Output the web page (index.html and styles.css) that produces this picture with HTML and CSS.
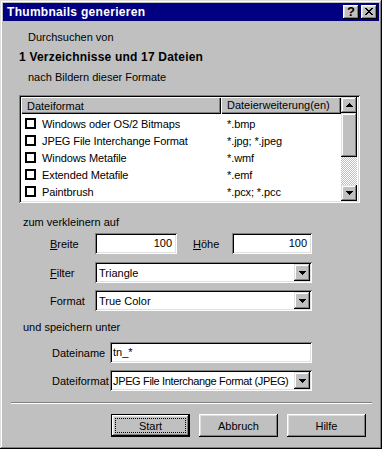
FILE: index.html
```html
<!DOCTYPE html>
<html lang="de">
<head>
    <meta charset="UTF-8">
    <title>Thumbnails generieren</title>
    <link rel="stylesheet" href="styles.css">
</head>
<body>
<div class="window">
    <div class="titlebar">
        <div class="title">Thumbnails generieren</div>
        <div class="title-btn help">?</div>
        <div class="title-btn">
            <svg width="8" height="7" viewBox="0 0 8 7" shape-rendering="crispEdges">
                <path d="M0 0h2v1h-2zM6 0h2v1h-2zM1 1h2v1h-2zM5 1h2v1h-2zM2 2h4v1h-4zM3 3h2v1h-2zM2 4h4v1h-4zM1 5h2v1h-2zM5 5h2v1h-2zM0 6h2v1h-2zM6 6h2v1h-2z"/>
            </svg>
        </div>
    </div>

    <div class="content">
        <div class="line intro">Durchsuchen von</div>
        <div class="line summary">1 Verzeichnisse und 17 Dateien</div>
        <div class="line intro formats-label">nach Bildern dieser Formate</div>

        <div class="listbox">
            <div class="list">
                <div class="list-head">
                    <div class="head-cell col-name">Dateiformat</div>
                    <div class="head-cell col-ext">Dateierweiterung(en)</div>
                </div>
                <div class="list-row">
                    <div class="col-name"><span class="check"></span>Windows oder OS/2 Bitmaps</div>
                    <div class="col-ext">*.bmp</div>
                </div>
                <div class="list-row">
                    <div class="col-name"><span class="check"></span>JPEG File Interchange Format</div>
                    <div class="col-ext">*.jpg; *.jpeg</div>
                </div>
                <div class="list-row">
                    <div class="col-name"><span class="check"></span>Windows Metafile</div>
                    <div class="col-ext">*.wmf</div>
                </div>
                <div class="list-row">
                    <div class="col-name"><span class="check"></span>Extended Metafile</div>
                    <div class="col-ext">*.emf</div>
                </div>
                <div class="list-row">
                    <div class="col-name"><span class="check"></span>Paintbrush</div>
                    <div class="col-ext">*.pcx; *.pcc</div>
                </div>
            </div>
            <div class="scrollbar">
                <div class="raised scroll-btn">
                    <svg width="7" height="4" viewBox="0 0 7 4" shape-rendering="crispEdges"><path d="M3 0h1v1h1v1h1v1h1v1h-7v-1h1v-1h1v-1h1z"/></svg>
                </div>
                <div class="raised thumb"></div>
                <div class="track"></div>
                <div class="raised scroll-btn">
                    <svg width="7" height="4" viewBox="0 0 7 4" shape-rendering="crispEdges"><path d="M0 0h7v1h-1v1h-1v1h-1v1h-1v-1h-1v-1h-1v-1h-1z"/></svg>
                </div>
            </div>
        </div>

        <div class="line group-label">zum verkleinern auf</div>
        <div class="group size-group">
            <div class="field-row first">
                <div class="label"><u>B</u>reite</div>
                <div class="sunken edit number small">100</div>
                <div class="label height-label"><u>H</u>öhe</div>
                <div class="sunken edit number small-right">100</div>
            </div>
            <div class="field-row filter-row">
                <div class="label"><u>F</u>ilter</div>
                <div class="sunken combo wide">
                    <span class="combo-text">Triangle</span>
                    <span class="raised drop-btn"><svg width="7" height="4" viewBox="0 0 7 4" shape-rendering="crispEdges"><path d="M0 0h7v1h-1v1h-1v1h-1v1h-1v-1h-1v-1h-1v-1h-1z"/></svg></span>
                </div>
            </div>
            <div class="field-row">
                <div class="label">Format</div>
                <div class="sunken combo wide">
                    <span class="combo-text">True Color</span>
                    <span class="raised drop-btn"><svg width="7" height="4" viewBox="0 0 7 4" shape-rendering="crispEdges"><path d="M0 0h7v1h-1v1h-1v1h-1v1h-1v-1h-1v-1h-1v-1h-1z"/></svg></span>
                </div>
            </div>
        </div>

        <div class="line group-label save-label">und speichern unter</div>
        <div class="group save-group">
            <div class="field-row first">
                <div class="label save">Dateiname</div>
                <div class="sunken edit narrow">tn_*</div>
            </div>
            <div class="field-row filter-row">
                <div class="label save">Dateiformat</div>
                <div class="sunken combo narrow">
                    <span class="combo-text condensed">JPEG File Interchange Format (JPEG)</span>
                    <span class="raised drop-btn"><svg width="7" height="4" viewBox="0 0 7 4" shape-rendering="crispEdges"><path d="M0 0h7v1h-1v1h-1v1h-1v1h-1v-1h-1v-1h-1v-1h-1z"/></svg></span>
                </div>
            </div>
        </div>
    </div>

    <div class="separator"></div>

    <div class="buttons">
        <button class="btn default"><span class="focus">Start</span></button>
        <button class="btn">Abbruch</button>
        <button class="btn">Hilfe</button>
    </div>
</div>
</body>
</html>
```

FILE: styles.css
```css
* {
    box-sizing: border-box;
}

body {
    margin: 0;
    font-family: "Liberation Sans", Arial, sans-serif;
    font-size: 11px;
    color: #000;
    background: #c0c0c0;
}

/* Window frame */
.window {
    width: 382px;
    height: 449px;
    padding: 3px;
    background: #c0c0c0;
    box-shadow: inset -1px -1px #000, inset 1px 1px #dfdfdf,
                inset -2px -2px #808080, inset 2px 2px #fff;
    display: flex;
    flex-direction: column;
}

.titlebar {
    height: 18px;
    background: #000080;
    color: #fff;
    display: flex;
    align-items: center;
    padding: 0 2px 0 4px;
}

.title {
    flex: 1;
    font-weight: bold;
    font-size: 12px;
    letter-spacing: 0.3px;
}

.raised {
    background: #c0c0c0;
    box-shadow: inset -1px -1px #000, inset 1px 1px #dfdfdf,
                inset -2px -2px #808080, inset 2px 2px #fff;
}

.sunken {
    background: #fff;
    box-shadow: inset 1px 1px #808080, inset -1px -1px #fff,
                inset 2px 2px #000, inset -2px -2px #dfdfdf;
}

.title-btn {
    width: 16px;
    height: 14px;
    color: #000;
    background: #c0c0c0;
    box-shadow: inset -1px -1px #000, inset 1px 1px #fff,
                inset -2px -2px #808080, inset 2px 2px #dfdfdf;
    display: flex;
    align-items: center;
    justify-content: center;
    padding-bottom: 1px;
}

.title-btn + .title-btn {
    margin-left: 2px;
}

.title-btn.help {
    font-weight: bold;
    font-size: 13px;
    line-height: 12px;
}

/* Content */
.content {
    padding-left: 16px;
}

.line {
    height: 13px;
    line-height: 13px;
    white-space: nowrap;
}

.intro {
    margin: 10px 0 0 9px;
}

.summary {
    margin-top: 7px;
    font-weight: bold;
    font-size: 12px;
    letter-spacing: 0.2px;
}

.formats-label {
    margin-top: 7px;
}

/* List view */
.listbox {
    margin-top: 11px;
    width: 341px;
    height: 108px;
    padding: 2px;
    display: flex;
    background: #fff;
    box-shadow: inset 1px 1px #808080, inset -1px -1px #fff,
                inset 2px 2px #000, inset -2px -2px #dfdfdf;
}

.list {
    width: 320px;
    overflow: hidden;
}

.list-head {
    display: flex;
    height: 17px;
}

.head-cell {
    background: #c0c0c0;
    line-height: 16px;
    padding-left: 6px;
    box-shadow: inset 1px 1px #fff, inset -1px -1px #000, inset -2px -2px #808080;
}

.col-name {
    width: 200px;
    display: flex;
    align-items: center;
}

.col-ext {
    width: 120px;
    padding-left: 6px;
}

.list-row {
    display: flex;
    align-items: center;
    height: 17px;
    white-space: nowrap;
    letter-spacing: -0.1px;
}

.list-head + .list-row {
    margin-top: 1px;
}

.list-row .col-name {
    padding-left: 4px;
}

.check {
    width: 11px;
    height: 11px;
    border: 2px solid #000;
    background: #fff;
    margin-right: 6px;
}

.scrollbar {
    width: 16px;
    display: flex;
    flex-direction: column;
}

.scroll-btn {
    height: 16px;
    display: flex;
    align-items: center;
    justify-content: center;
}

.thumb {
    height: 44px;
}

.track {
    flex: 1;
    background: repeating-conic-gradient(#c0c0c0 0 25%, #fff 0 50%) 0 0 / 2px 2px;
}

/* Form groups */
.group-label {
    margin: 13px 0 0 4px;
}

.save-label {
    margin-top: 10px;
}

.group {
    margin-left: 31px;
}

.save-group {
    margin-left: 33px;
}

.field-row {
    display: flex;
    align-items: center;
    height: 21px;
    margin-top: 7px;
}

.field-row.first {
    margin-top: 4px;
}

.size-group .filter-row {
    margin-top: 8px;
}

.save-group .field-row.first {
    margin-top: 8px;
}

.label {
    width: 45px;
    white-space: nowrap;
}

.label.save {
    width: 58px;
}

.height-label {
    width: 39px;
    margin-left: 16px;
}

.edit {
    height: 21px;
    line-height: 21px;
    padding: 0 5px 0 3px;
    white-space: nowrap;
}

.number {
    text-align: right;
}

.small {
    width: 82px;
}

.small-right {
    width: 80px;
}

.wide {
    width: 217px;
}

.narrow {
    width: 202px;
}

.combo {
    height: 21px;
    padding: 2px;
    display: flex;
    align-items: center;
}

.combo-text {
    flex: 1;
    padding-left: 2px;
    white-space: nowrap;
    overflow: hidden;
}

.combo-text.condensed {
    letter-spacing: -0.35px;
    padding-left: 1px;
}

.drop-btn {
    width: 16px;
    height: 17px;
    display: flex;
    align-items: center;
    justify-content: center;
}

/* Bottom */
.separator {
    margin: 11px 7px 0 8px;
    height: 2px;
    border-top: 1px solid #808080;
    border-bottom: 1px solid #fff;
}

.buttons {
    display: flex;
    gap: 9px;
    padding-left: 108px;
    margin-top: 10px;
}

.btn {
    width: 79px;
    height: 23px;
    padding: 0;
    border: none;
    font: inherit;
    color: #000;
    background: #c0c0c0;
    box-shadow: inset -1px -1px #000, inset 1px 1px #fff,
                inset -2px -2px #808080, inset 2px 2px #dfdfdf;
}

.btn.default {
    padding: 4px;
    display: flex;
    box-shadow: inset 0 0 0 1px #000, inset -2px -2px #000, inset 2px 2px #fff,
                inset -3px -3px #808080, inset 3px 3px #dfdfdf;
}

.focus {
    flex: 1;
    border: 1px dotted #000;
    display: flex;
    align-items: center;
    justify-content: center;
}
```
